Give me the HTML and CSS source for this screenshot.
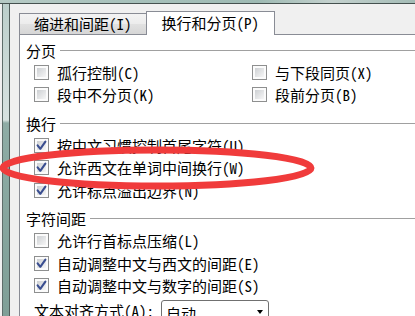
FILE: index.html
```html
<!DOCTYPE html>
<html lang="zh-CN">
<head>
<meta charset="utf-8">
<title>段落</title>
<link rel="stylesheet" href="styles.css">
</head>
<body>
<div class="glass-top"></div>
<div class="shell">
  <div class="glass-left"></div>
  <div class="client">
    <div class="tabs">
      <div class="tab">缩进和间距(I)</div>
      <div class="tab active">换行和分页(P)</div>
    </div>
    <div class="panel">
      <section class="group">
        <div class="group-title"><span>分页</span><i class="rule"></i></div>
        <div class="grid2">
          <div class="cb"><span class="box"></span><span>孤行控制(C)</span></div>
          <div class="cb"><span class="box"></span><span>与下段同页(X)</span></div>
          <div class="cb"><span class="box"></span><span>段中不分页(K)</span></div>
          <div class="cb"><span class="box"></span><span>段前分页(B)</span></div>
        </div>
      </section>
      <section class="group">
        <div class="group-title"><span>换行</span><i class="rule"></i></div>
        <div class="cb"><span class="box"><svg class="tick" viewBox="0 0 15 15"><path d="M3.6 7.4 L6.3 10.8 L11.4 3.6"/></svg></span><span>按中文习惯控制首尾字符(U)</span></div>
        <div class="cb"><span class="box"><svg class="tick" viewBox="0 0 15 15"><path d="M3.6 7.4 L6.3 10.8 L11.4 3.6"/></svg></span><span>允许西文在单词中间换行(W)</span></div>
        <div class="cb"><span class="box"><svg class="tick" viewBox="0 0 15 15"><path d="M3.6 7.4 L6.3 10.8 L11.4 3.6"/></svg></span><span>允许标点溢出边界(N)</span></div>
      </section>
      <section class="group">
        <div class="group-title"><span>字符间距</span><i class="rule"></i></div>
        <div class="cb"><span class="box"></span><span>允许行首标点压缩(L)</span></div>
        <div class="cb"><span class="box"><svg class="tick" viewBox="0 0 15 15"><path d="M3.6 7.4 L6.3 10.8 L11.4 3.6"/></svg></span><span>自动调整中文与西文的间距(E)</span></div>
        <div class="cb"><span class="box"><svg class="tick" viewBox="0 0 15 15"><path d="M3.6 7.4 L6.3 10.8 L11.4 3.6"/></svg></span><span>自动调整中文与数字的间距(S)</span></div>
      </section>
      <div class="field">
        <span>文本对齐方式(A):</span>
        <div class="select"><span>自动</span><i class="arrow"></i></div>
      </div>
    </div>
  </div>
</div>
<svg class="mark" width="415" height="316" viewBox="0 0 415 316"><ellipse cx="157" cy="168" rx="154" ry="18" fill="none" stroke="#f03b3b" stroke-width="7"/></svg>
</body>
</html>
```
FILE: styles.css
```css
html, body {
  margin: 0;
  height: 100%;
}
body {
  position: relative;
  overflow: hidden;
  background: #f0f0f0;
  font-family: "Noto Sans CJK SC", "Noto Sans", sans-serif;
  font-size: 15px;
  color: #000;
  font-feature-settings: "hwid";
}
.glass-top {
  height: 3px;
  background: linear-gradient(to right, #b6cac5 0, #a7c1bb 30%, #9ebab3 62%, #c4d1ce 80%, #a4bcb6 100%);
  border-bottom: 1px solid #45514f;
}
.shell {
  display: flex;
  height: 312px;
}
.glass-left {
  flex: none;
  width: 6px;
  margin-left: 2px;
  border-left: 1px solid #5e6d6a;
  border-right: 1px solid #505c5a;
  background: linear-gradient(#bccfcb 0, #d7e2e0 116px, #8eaca5 119px, #7f9f97 100%);
}
.client {
  flex: 1;
  min-width: 0;
  display: flex;
  flex-direction: column;
  padding: 7px 0 0 9px;
}
.tabs {
  display: flex;
  align-items: flex-end;
  height: 23px;
  position: relative;
  z-index: 1;
}
.tab {
  box-sizing: border-box;
  height: 21px;
  padding: 0 14px;
  line-height: 20px;
  border: 1px solid #898c95;
  border-bottom: none;
  background: linear-gradient(#f3f3f3, #ececec 50%, #e1e1e1 52%, #d6d6d6);
  white-space: nowrap;
}
.tab.active {
  height: 24px;
  margin-left: -1px;
  margin-bottom: -1px;
  padding: 0 15px;
  line-height: 22px;
  background: #fff;
}
.panel {
  flex: 1;
  box-sizing: border-box;
  width: calc(100% + 10px);
  padding-top: 4px;
  background: #fff;
  border: 1px solid #898c95;
}
.group {
  margin-bottom: 6px;
}
.group-title {
  display: flex;
  align-items: center;
  height: 22px;
  padding-left: 6px;
}
.rule {
  flex: 1;
  height: 1px;
  margin-left: 4px;
  background: #a0a0a0;
}
.grid2 {
  display: grid;
  grid-template-columns: 218px auto;
}
.cb {
  display: flex;
  align-items: center;
  height: 22.5px;
  padding-left: 14px;
  white-space: nowrap;
}
.box {
  position: relative;
  flex: none;
  box-sizing: border-box;
  width: 15px;
  height: 15px;
  margin-right: 8px;
  padding: 2px;
  border: 1px solid #8e8f8f;
  background: linear-gradient(135deg, #cdd0d3, #f6f6f6) content-box, #fbfbfb;
}
.tick {
  position: absolute;
  left: -1px;
  top: -1px;
  width: 15px;
  height: 15px;
  fill: none;
  stroke: #3a4e90;
  stroke-width: 2.1;
  stroke-linecap: round;
  stroke-linejoin: round;
}
.field {
  display: flex;
  align-items: flex-start;
  height: 22px;
  margin-top: -3px;
  padding-left: 14px;
  line-height: 22px;
  white-space: nowrap;
}
.select {
  box-sizing: border-box;
  display: flex;
  justify-content: space-between;
  align-items: flex-start;
  width: 108px;
  height: 24px;
  margin-left: 7px;
  padding: 3px 0 0 4px;
  line-height: 20px;
  border: 1px solid #707070;
  border-radius: 3px;
  background: #fff;
}
.arrow {
  width: 0;
  height: 0;
  margin: 6px 5px 0 0;
  border-left: 3.5px solid transparent;
  border-right: 3.5px solid transparent;
  border-top: 4px solid #000;
}
.mark {
  position: absolute;
  left: 0;
  top: 0;
  pointer-events: none;
}
```
